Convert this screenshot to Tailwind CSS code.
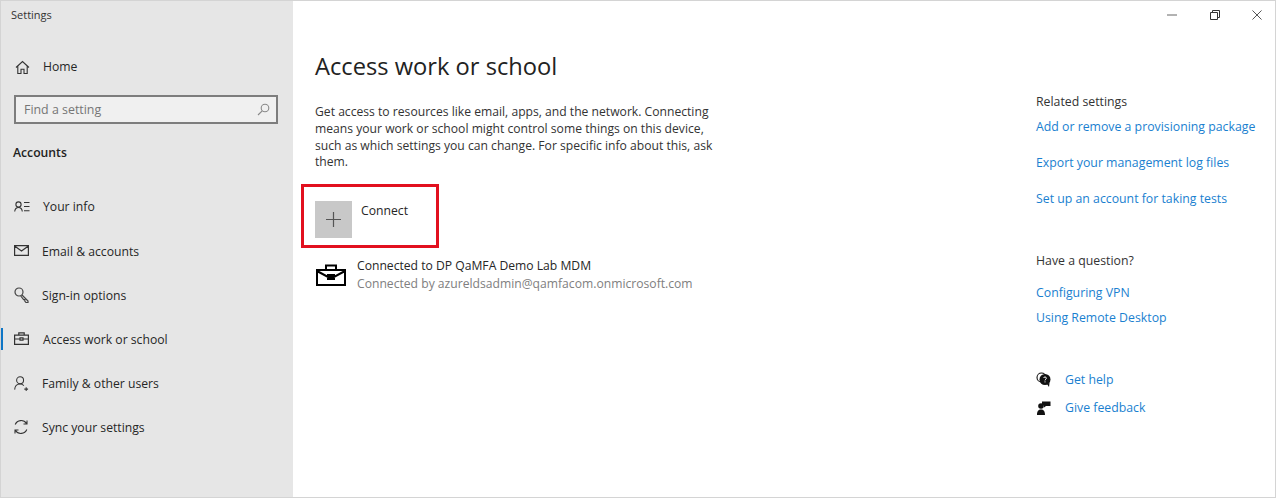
<!DOCTYPE html>
<html><head><meta charset="utf-8"><script src="https://cdn.jsdelivr.net/npm/@tailwindcss/browser@4"></script></head>
<body class="m-0 bg-white">
<div class="flex w-[1276px] h-[498px] overflow-hidden border border-[#d4d4d4] font-['Open_Sans','Noto_Sans',sans-serif] text-[#262626]">
  <aside class="w-[292px] shrink-0 bg-[#e6e6e6] flex flex-col">
    <div class="h-[29px] pl-[10px] pt-[6px] text-[11px] leading-[15px] text-[#333]">Settings</div>
    <div class="mt-[23px] h-[28px] flex items-center pl-[14px] gap-[13px] text-[12.2px]">
      <svg class="w-[15px] h-[15px]" viewBox="0 0 15 15" fill="none" stroke="#333" stroke-width="1.1"><path d="M1 7.5 7.5 1.5 14 7.5M2.8 6.2V13.5H6V9.3H9V13.5H12.2V6.2"/></svg>
      <span>Home</span>
    </div>
    <div class="mt-[14px] ml-[13px] mr-[15px] h-[29px] border-2 border-[#7d7d7d] bg-[#f0f0f0] flex items-center justify-between pl-[8px] pr-[6px] text-[12.4px] text-[#767676]">
      <span class="pt-[2px]">Find a setting</span>
      <svg class="w-[13px] h-[13px]" viewBox="0 0 13 13" fill="none" stroke="#888" stroke-width="1.1"><circle cx="8" cy="5" r="3.8"/><path d="M5.2 7.8 1 12"/></svg>
    </div>
    <div class="mt-[20px] pl-[12px] text-[12.2px] leading-[18px] font-semibold text-[#222]">Accounts</div>
    <nav class="mt-[23px] flex flex-col text-[12.2px]">
      <div class="h-[45px] flex items-center pl-[13px] gap-[13px]">
        <svg class="w-[16px] h-[12px] mb-[2px]" viewBox="0 0 16 12" fill="none" stroke="#333" stroke-width="1.1"><circle cx="4.5" cy="3.5" r="2.6"/><path d="M.7 10.5C1 7.8 2.5 6.5 4.5 6.5S8 7.8 8.3 10.5M10 1.5H15.5M10 5.5H15.5M10 9.8H15.5"/></svg>
        <span>Your info</span>
      </div>
      <div class="h-[44px] flex items-center pl-[13px] gap-[13px]">
        <svg class="w-[15px] h-[11px] mb-[3px]" viewBox="0 0 15 11" fill="none" stroke="#333" stroke-width="1.2"><path d="M.6.6H14.4V10.4H.6ZM.6 1 7.5 6 14.4 1"/></svg>
        <span>Email &amp; accounts</span>
      </div>
      <div class="h-[44px] flex items-center pl-[13px] gap-[13px]">
        <svg class="w-[15px] h-[16px] mb-[2px]" viewBox="0 0 15 16" fill="none" stroke="#444" stroke-width="1.2"><circle cx="5" cy="5" r="4"/><path d="M8 8 14 14V15.5H12L10.8 14V12.6H9.6L6.8 9"/></svg>
        <span>Sign-in options</span>
      </div>
      <div class="relative h-[44px] flex items-center pl-[13px] gap-[14px]">
        <div class="absolute left-0 top-[10px] w-[2px] h-[22px] bg-[#0f76c6]"></div>
        <svg class="w-[15px] h-[13px] mb-[3px]" viewBox="0 0 15 13" fill="none" stroke="#333" stroke-width="1.2"><path d="M.6 3.2H14.4V12.4H.6ZM4.8 3.2V.8H10.2V3.2M.6 7H6M9 7H14.4M6 5.8H9V8.2H6Z"/></svg>
        <span>Access work or school</span>
      </div>
      <div class="h-[44px] flex items-center pl-[13px] gap-[13px]">
        <svg class="w-[15px] h-[15px] mb-[2px]" viewBox="0 0 16 16" fill="none" stroke="#333" stroke-width="1.1"><circle cx="6.5" cy="4.5" r="3.7"/><path d="M.7 14.5C1 10.5 3.5 8.6 6.5 8.6 8 8.6 9.5 9.2 10.5 10.3M13 12V16M11 14H15"/></svg>
        <span>Family &amp; other users</span>
      </div>
      <div class="h-[44px] flex items-center pl-[12px] gap-[13px]">
        <svg class="w-[16px] h-[16px] mb-[3px]" viewBox="0 0 16 16" fill="none" stroke="#333" stroke-width="1.1"><path d="M2.2 5.5A6.4 6.4 0 0 1 13.5 4.5M13.8 10.5A6.4 6.4 0 0 1 2.5 11.5M14 1.5V5H10.5M2 14.5V11H5.5"/></svg>
        <span>Sync your settings</span>
      </div>
    </nav>
  </aside>
  <main class="flex-1 relative flex">
    <div class="w-[743px] pl-[22px] shrink-0">
      <h1 class="mt-[48px] text-[23.7px] leading-[34px] font-normal text-[#222]">Access work or school</h1>
      <p class="mt-[21px] w-[410px] text-[12.15px] leading-[16.8px] text-[#333]">Get access to resources like email, apps, and the network. Connecting means your work or school might control some things on this device, such as which settings you can change. For specific info about this, ask them.</p>
      <div class="relative mt-[13px] -ml-[14px] w-[138px] h-[64px] border-[3px] border-[#e2101f] flex pl-[11px] pt-[14px] gap-[9px]">
        <div class="w-[37px] h-[37px] bg-[#c8c8c8] flex items-center justify-center">
          <svg class="w-[15px] h-[15px]" viewBox="0 0 15 15" stroke="#555" stroke-width="1.2"><path d="M7.5 0V15M0 7.5H15"/></svg>
        </div>
        <span class="text-[12.2px] leading-[17px] mt-[1px]">Connect</span>
      </div>
      <div class="mt-[9px] ml-[1px] flex items-center gap-[11px]">
        <svg class="w-[30px] h-[22px]" viewBox="0 0 30 22" fill="none" stroke="#000" stroke-width="2"><path d="M1 6H29V21H1ZM10 6V1.5H20V6M1 7 12 13H18L29 7M12 11H18V15H12Z"/></svg>
        <div class="text-[12.15px] leading-[18px]">
          <div>Connected to DP QaMFA Demo Lab MDM</div>
          <div class="text-[#808080]">Connected by azureldsadmin@qamfacom.onmicrosoft.com</div>
        </div>
      </div>
    </div>
    <div class="pt-[92px] text-[12.3px] leading-[17px] flex flex-col items-start text-[#1a7fd0]">
      <div class="text-[#333]">Related settings</div>
      <a class="mt-[8px]">Add or remove a provisioning package</a>
      <a class="mt-[19px]">Export your management log files</a>
      <a class="mt-[19px]">Set up an account for taking tests</a>
      <div class="mt-[45px] text-[#333]">Have a question?</div>
      <a class="mt-[15px]">Configuring VPN</a>
      <a class="mt-[8px]">Using Remote Desktop</a>
      <a class="mt-[45px] flex items-center gap-[14px]">
        <svg class="w-[15px] h-[15px]" viewBox="0 0 15 15"><circle cx="5.5" cy="5.5" r="4.5" fill="none" stroke="#111" stroke-width="1.1"/><circle cx="9" cy="7.5" r="5.5" fill="#111"/><path d="M11 12 13 15 13.5 11Z" fill="#111"/><path d="M7.6 6C7.8 4.6 10.4 4.6 10.4 6.2 10.4 7.2 9 7.2 9 8.4M9 9.4V10.4" fill="none" stroke="#fff"/></svg>
        <span>Get help</span>
      </a>
      <a class="mt-[11px] flex items-center gap-[14px]">
        <svg class="w-[15px] h-[15px]" viewBox="0 0 15 15" fill="#111"><circle cx="5" cy="6" r="2.8"/><path d="M1 15C1 11 2.5 9.5 5 9.5S9 11 9 15ZM6 1.5H14.5V6H10L8 7.5V5.5H6Z"/></svg>
        <span>Give feedback</span>
      </a>
    </div>
    <div class="absolute top-0 right-0 h-[27px] flex items-center">
      <div class="w-[42px] flex justify-center"><svg class="w-[10px] h-[2px]" viewBox="0 0 10 2" stroke="#666"><path d="M0 1H10"/></svg></div>
      <div class="w-[43px] flex justify-center"><svg class="w-[10px] h-[10px]" viewBox="0 0 10 10" fill="none" stroke="#333"><path d="M.5 2.5H7.5V9.5H.5ZM2.5 2.5V.5H9.5V7.5H7.5"/></svg></div>
      <div class="w-[39px] flex justify-start pl-[16px]"><svg class="w-[10px] h-[10px]" viewBox="0 0 11 11" stroke="#444"><path d="M.5.5 10.5 10.5M10.5.5.5 10.5"/></svg></div>
    </div>
  </main>
</div>
</body></html>
